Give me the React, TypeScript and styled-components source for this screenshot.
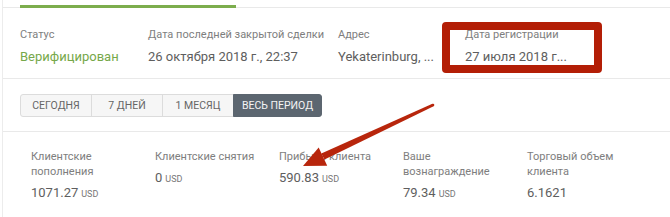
import styled, { createGlobalStyle } from "styled-components";

const GlobalStyle = createGlobalStyle`
  html, body {
    margin: 0;
    padding: 0;
    background: #ffffff;
    font-family: Roboto, "Liberation Sans", Arial, sans-serif;
  }
`;

const Page = styled.div`
  position: relative;
  width: 670px;
  height: 217px;
  overflow: hidden;
  background: #fff;
`;

const Panel = styled.div`
  margin-left: 2px;
  border-left: 1px solid #ececec;
`;

const TabStrip = styled.div`
  display: flex;
  align-items: flex-end;
  height: 8px;
  box-sizing: border-box;
  border-bottom: 1px solid #e9e9e9;
`;

const ActiveTab = styled.div`
  margin-left: 17px;
  margin-bottom: -1px;
  width: 216px;
  height: 3px;
  background: #7cad4d;
`;

const InfoRow = styled.div`
  display: flex;
  padding: 20px 0 13px 17px;
  border-bottom: 1px solid #e9e9e9;
`;

const InfoCol = styled.div<{ $width: number }>`
  width: ${(p) => p.$width}px;
  flex-shrink: 0;
`;

const Label = styled.div`
  font-size: 11px;
  line-height: 14px;
  color: #7e7e7e;
`;

const InfoValue = styled.div<{ $accent?: boolean }>`
  margin-top: 6px;
  font-size: 13px;
  line-height: 17px;
  color: ${(p) => (p.$accent ? "#76a84a" : "#5e5e5e")};
  white-space: nowrap;
`;

const PeriodRow = styled.div`
  padding: 15px 0 14px 17px;
  border-bottom: 1px solid #e9e9e9;
`;

const ButtonGroup = styled.div`
  display: inline-flex;
`;

const PeriodButton = styled.div<{ $active?: boolean }>`
  min-width: 72px;
  box-sizing: border-box;
  height: 23px;
  padding: 0 8px;
  display: flex;
  align-items: center;
  justify-content: center;
  font-size: 10.5px;
  text-transform: uppercase;
  color: ${(p) => (p.$active ? "#f4f4f4" : "#666")};
  background: ${(p) => (p.$active ? "#5c6670" : "#f6f6f6")};
  border: 1px solid ${(p) => (p.$active ? "#5c6670" : "#dcdcdc")};
  margin-left: -1px;
  &:first-child {
    margin-left: 0;
    border-radius: 3px 0 0 3px;
  }
  &:last-child {
    border-radius: 0 3px 3px 0;
  }
`;

const StatsRow = styled.div`
  display: flex;
  padding: 17px 0 15px 28px;
  border-bottom: 1px solid #e9e9e9;
`;

const StatCol = styled.div`
  width: 124px;
  flex-shrink: 0;
`;

const StatLabel = styled.div`
  width: 100px;
  font-size: 11px;
  line-height: 15px;
  color: #7e7e7e;
`;

const StatValue = styled.div`
  margin-top: 6px;
  font-size: 13px;
  line-height: 16px;
  color: #5e5e5e;
`;

const Unit = styled.span`
  font-size: 9px;
  color: #777;
  margin-left: 3px;
`;

const HighlightBox = styled.div`
  position: absolute;
  left: 442px;
  top: 22px;
  width: 160px;
  height: 51px;
  box-sizing: border-box;
  border: 8px solid #b31e06;
  border-radius: 4px;
  pointer-events: none;
`;

const ArrowLayer = styled.svg`
  position: absolute;
  left: 0;
  top: 0;
  pointer-events: none;
`;

const periods = ["Сегодня", "7 дней", "1 месяц", "Весь период"];

const stats = [
  { label: "Клиентские пополнения", value: "1071.27", unit: "USD" },
  { label: "Клиентские снятия", value: "0", unit: "USD" },
  { label: "Прибыль клиента", value: "590.83", unit: "USD" },
  { label: "Ваше вознаграждение", value: "79.34", unit: "USD" },
  { label: "Торговый объем клиента", value: "6.1621", unit: "" },
];

export default function App() {
  return (
    <Page>
      <GlobalStyle />
      <Panel>
        <TabStrip>
          <ActiveTab />
        </TabStrip>
        <InfoRow>
          <InfoCol $width={128}>
            <Label>Статус</Label>
            <InfoValue $accent>Верифицирован</InfoValue>
          </InfoCol>
          <InfoCol $width={190}>
            <Label>Дата последней закрытой сделки</Label>
            <InfoValue>26 октября 2018 г., 22:37</InfoValue>
          </InfoCol>
          <InfoCol $width={127}>
            <Label>Адрес</Label>
            <InfoValue>Yekaterinburg, ...</InfoValue>
          </InfoCol>
          <InfoCol $width={160}>
            <Label>Дата регистрации</Label>
            <InfoValue>27 июля 2018 г...</InfoValue>
          </InfoCol>
        </InfoRow>
        <PeriodRow>
          <ButtonGroup>
            {periods.map((p, i) => (
              <PeriodButton key={p} $active={i === periods.length - 1}>
                {p}
              </PeriodButton>
            ))}
          </ButtonGroup>
        </PeriodRow>
        <StatsRow>
          {stats.map((s) => (
            <StatCol key={s.label}>
              <StatLabel>{s.label}</StatLabel>
              <StatValue>
                {s.value}
                {s.unit && <Unit>{s.unit}</Unit>}
              </StatValue>
            </StatCol>
          ))}
        </StatsRow>
      </Panel>
      <HighlightBox />
      <ArrowLayer width="670" height="217" viewBox="0 0 670 217">
        <polygon
          points="433.6,106.2 432.4,103.8 321.3,153.6 324.5,159.6"
          fill="#b8260c"
        />
        <circle cx="433" cy="105" r="1.3" fill="#b8260c" />
        <polygon points="303,166 318.7,147.6 327.2,165.7" fill="#b8260c" />
      </ArrowLayer>
    </Page>
  );
}
